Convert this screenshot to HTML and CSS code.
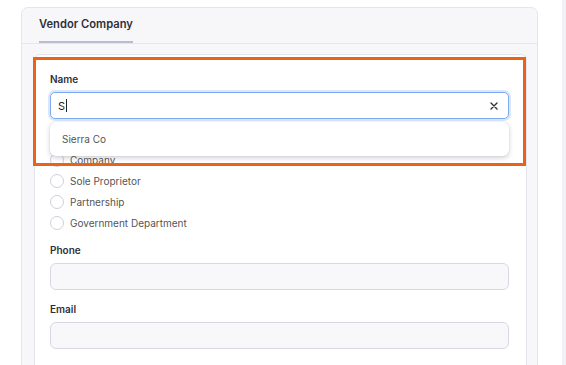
FILE: index.html
```html
<!DOCTYPE html>
<html lang="en">
<head>
  <meta charset="UTF-8" />
  <meta name="viewport" content="width=device-width, initial-scale=1.0"/>
  <title>Vendor Company</title>
  <link rel="stylesheet" href="styles.css">
</head>
<body>
  <div class="page">
    <div class="card">
      <div class="card-header">
        <div class="tab">Vendor Company</div>
      </div>

      <div class="card-body">
        <div class="panel">
          <div class="field">
            <label class="label">Name</label>
            <div class="combo">
              <div class="combo-input">
                <span class="value">S</span><span class="caret"></span>
                <svg class="clear" width="8" height="8" viewBox="0 0 8 8">
                  <path d="M1 1 L7 7 M7 1 L1 7" stroke="#333" stroke-width="1.4" stroke-linecap="round" />
                </svg>
              </div>
              <div class="menu">
                <div class="menu-item">Sierra Co</div>
              </div>
            </div>
          </div>

          <div class="field radio-field">
            <div class="radio"><span class="dot"></span>Company</div>
            <div class="radio"><span class="dot"></span>Sole Proprietor</div>
            <div class="radio"><span class="dot"></span>Partnership</div>
            <div class="radio"><span class="dot"></span>Government Department</div>
          </div>

          <div class="field">
            <label class="label">Phone</label>
            <input class="text-input" type="text" />
          </div>

          <div class="field">
            <label class="label">Email</label>
            <input class="text-input" type="text" />
          </div>

          <div class="highlight"></div>
        </div>
      </div>
    </div>

    <div class="scroll-track"></div>
  </div>
</body>
</html>
```

FILE: styles.css
```css
html, body {
  margin: 0;
  padding: 0;
  height: 100%;
  overflow: hidden;
}

body {
  font-family: Inter, "Noto Sans", Arial, sans-serif;
  background: #fff;
  color: #333;
}

.page {
  display: flex;
  justify-content: space-between;
  height: 100%;
}

.card {
  width: 517px;
  margin: 7px 0 0 21px;
  box-sizing: border-box;
  background: #f7f7fa;
  border: 1px solid #e4e5ee;
  border-radius: 7px;
  align-self: flex-start;
}

.card-header {
  padding: 0 17px;
  border-bottom: 1px solid #e4e5ee;
  display: flex;
}

.tab {
  padding: 9px 0 10px;
  line-height: 14px;
  font-size: 11.2px;
  font-weight: 600;
  color: #2e2f38;
  border-bottom: 2px solid #b9bcd2;
}

.card-body {
  padding: 10px 10px 0 12px;
}

.panel {
  position: relative;
  background: #fff;
  border: 1px solid #e2e4ee;
  border-radius: 6px;
  padding: 17px 17px 30px 15px;
}

.field {
  margin-bottom: 12px;
}

.radio-field {
  padding-top: 18px;
  margin-bottom: 10px;
}

.label {
  display: block;
  font-size: 10px;
  line-height: 14px;
  font-weight: 600;
  color: #2f3037;
  margin-bottom: 6px;
}

.combo {
  position: relative;
}

.combo-input {
  height: 27px;
  box-sizing: border-box;
  border: 1px solid #7fa8f3;
  border-radius: 5px;
  box-shadow: 0 0 0 2px #dbe6fc;
  background: #fff;
  display: flex;
  align-items: center;
  padding: 0 10px 0 7px;
  font-size: 11px;
  color: #222;
}

.caret {
  display: inline-block;
  width: 1px;
  height: 13px;
  background: #222;
  margin-left: 1px;
}

.clear {
  margin-left: auto;
}

.menu {
  position: absolute;
  top: 30px;
  left: 0;
  right: 0;
  background: #fff;
  border-radius: 6px;
  box-shadow: 0 2px 5px rgba(40, 45, 70, 0.22), 0 0 1px rgba(40, 45, 70, 0.2);
  z-index: 2;
}

.menu-item {
  height: 34px;
  line-height: 34px;
  padding: 0 12px;
  font-size: 10px;
  color: #555;
}

.radio {
  display: flex;
  align-items: center;
  height: 21px;
  font-size: 10px;
  color: #555;
}

.dot {
  width: 14px;
  height: 14px;
  box-sizing: border-box;
  border: 1px solid #cdd0dc;
  border-radius: 50%;
  background: #fff;
  margin-right: 6px;
}

.text-input {
  display: block;
  width: 100%;
  height: 27px;
  box-sizing: border-box;
  border: 1px solid #d6d8e6;
  border-radius: 6px;
  background: #f8f8fb;
  margin: 0;
}

.highlight {
  position: absolute;
  left: -2px;
  top: 2px;
  width: 493px;
  height: 109px;
  box-sizing: border-box;
  border: 3px solid #e8621a;
  z-index: 3;
}

.scroll-track {
  width: 4px;
  background: #f1f1f6;
}
```
